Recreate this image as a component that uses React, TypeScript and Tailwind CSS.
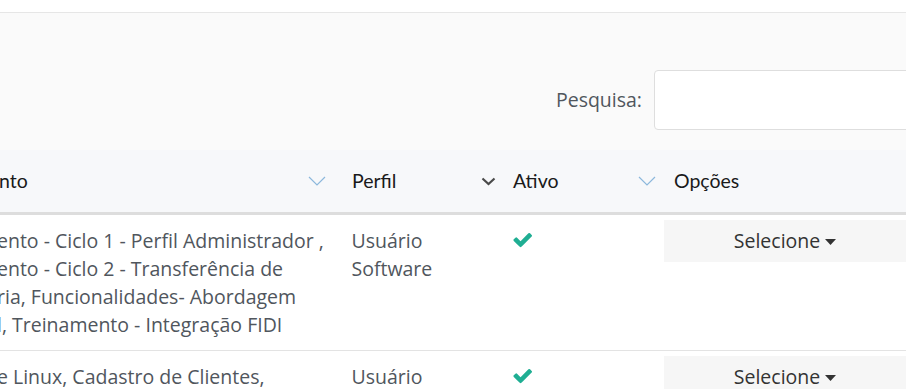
import React from "react";

const Chevron = ({ dark }: { dark?: boolean }) =>
  dark ? (
    <svg width="15" height="9" viewBox="0 0 15 9" className="shrink-0">
      <path d="M1.5 1.5 L7.5 7 L13.5 1.5" fill="none" stroke="#4a4a4a" strokeWidth="2.2" />
    </svg>
  ) : (
    <svg width="18" height="10" viewBox="0 0 18 10" className="shrink-0">
      <path d="M1 1 L9 9 L17 1" fill="none" stroke="#8db8dc" strokeWidth="1.2" />
    </svg>
  );

const Check = () => (
  <svg width="20" height="16" viewBox="0 270 1671 1300" className="block">
    <path
      fill="#1fae93"
      d="M1671 566q0 40-28 68l-724 724-136 136q-28 28-68 28t-68-28l-136-136-362-362q-28-28-28-68t28-68l136-136q28-28 68-28t68 28l294 295 656-657q28-28 68-28t68 28l136 136q28 28 28 68z"
    />
  </svg>
);

const Selecione = () => (
  <div className="flex h-[42px] w-[242px] items-center justify-center bg-[#f6f6f6] text-[#333]">
    <span>Selecione</span>
    <svg width="11" height="6" viewBox="0 0 11 6" className="ml-[5px] mt-[2px]">
      <path d="M0 0 L11 0 L5.5 6 Z" fill="#333" />
    </svg>
  </div>
);

export default function App() {
  const body = "font-['Open_Sans',sans-serif] text-[19.5px] leading-[28px] text-[#50565d]";
  return (
    <div className="h-[389px] w-[906px] overflow-hidden bg-white">
      <div className="h-[12px] bg-white" />
      <div className="border-t border-[#e6e6e6] bg-[#fafafa]">
        <div className="flex h-[137px] items-start justify-end overflow-hidden pt-[57px]">
          <div className="-mr-[20px] flex shrink-0 items-center">
            <span className="mr-[12px] font-['Open_Sans',sans-serif] text-[19.5px] text-[#50565d]">Pesquisa:</span>
            <div className="h-[60px] w-[272px] rounded-[4px] border border-[#dedede] bg-white" />
          </div>
        </div>
      </div>
      {/* header */}
      <div className="flex h-[65px] border-b-[3px] border-[#dddddd] bg-[#f7f8fa] font-['Lato',sans-serif] text-[19.5px] text-[#1a1a1a]">
        <div className="flex w-[340px] items-center justify-between pr-[14px]">
          <span className="-ml-[1px]">nto</span>
          <Chevron />
        </div>
        <div className="flex w-[161px] items-center justify-between pl-[12px] pr-[5px]">
          <span>Perfil</span>
          <Chevron dark />
        </div>
        <div className="flex w-[161px] items-center justify-between pl-[12px] pr-[6px]">
          <span>Ativo</span>
          <Chevron />
        </div>
        <div className="flex flex-1 items-center pl-[12px]">
          <span>Opções</span>
        </div>
      </div>
      {/* row 1 */}
      <div className={`flex h-[136px] border-b border-[#e3e3e3] ${body}`}>
        <div className="w-[340px] pt-[12px]">
          <div className="-ml-[3px] whitespace-nowrap">
            <div>ento - Ciclo 1 - Perfil Administrador ,</div>
            <div>ento - Ciclo 2 - Transferência de</div>
            <div>ria, Funcionalidades- Abordagem</div>
            <div>l, Treinamento - Integração FIDI</div>
          </div>
        </div>
        <div className="w-[161px] pl-[12px] pt-[12px]">
          <div>Usuário</div>
          <div>Software</div>
        </div>
        <div className="w-[164px] pl-[12px] pt-[17px]">
          <Check />
        </div>
        <div className="flex-1 pt-[5px]">
          <Selecione />
        </div>
      </div>
      {/* row 2 */}
      <div className={`flex ${body}`}>
        <div className="w-[340px] pt-[12px]">
          <div className="-ml-[3px] whitespace-nowrap">e Linux, Cadastro de Clientes,</div>
        </div>
        <div className="w-[161px] pl-[12px] pt-[12px]">
          <div>Usuário</div>
        </div>
        <div className="w-[164px] pl-[12px] pt-[17px]">
          <Check />
        </div>
        <div className="flex-1 pt-[5px]">
          <Selecione />
        </div>
      </div>
    </div>
  );
}
